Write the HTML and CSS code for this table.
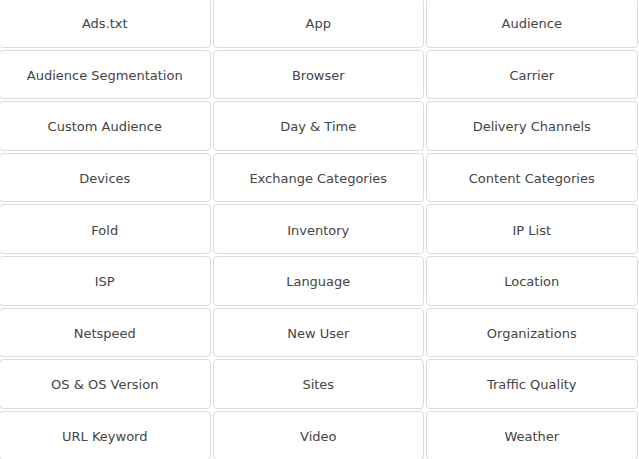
FILE: index.html
```html
<!DOCTYPE html>
<html>
<head>
<meta charset="utf-8">
<link rel="stylesheet" href="styles.css">
</head>
<body>
<div class="grid">
  <div class="cell">Ads.txt</div>
  <div class="cell">App</div>
  <div class="cell">Audience</div>
  <div class="cell">Audience Segmentation</div>
  <div class="cell">Browser</div>
  <div class="cell">Carrier</div>
  <div class="cell">Custom Audience</div>
  <div class="cell">Day &amp; Time</div>
  <div class="cell">Delivery Channels</div>
  <div class="cell">Devices</div>
  <div class="cell">Exchange Categories</div>
  <div class="cell">Content Categories</div>
  <div class="cell">Fold</div>
  <div class="cell">Inventory</div>
  <div class="cell">IP List</div>
  <div class="cell">ISP</div>
  <div class="cell">Language</div>
  <div class="cell">Location</div>
  <div class="cell">Netspeed</div>
  <div class="cell">New User</div>
  <div class="cell">Organizations</div>
  <div class="cell">OS &amp; OS Version</div>
  <div class="cell">Sites</div>
  <div class="cell">Traffic Quality</div>
  <div class="cell">URL Keyword</div>
  <div class="cell">Video</div>
  <div class="cell">Weather</div>
</div>
</body>
</html>
```
FILE: styles.css
```css
html, body {
  margin: 0;
  padding: 0;
  background: #fff;
  overflow: hidden;
}
.grid {
  display: grid;
  grid-template-columns: repeat(3, 211.5px);
  grid-auto-rows: 49.6px;
  gap: 2px;
  margin: -2px 0 0 -1px;
}
.cell {
  box-sizing: border-box;
  border: 1px solid #dcdcdc;
  border-radius: 4px;
  padding-top: 2px;
  display: flex;
  align-items: center;
  justify-content: center;
  font-family: "DejaVu Sans", Verdana, sans-serif;
  font-size: 13px;
  color: #444;
}
```
